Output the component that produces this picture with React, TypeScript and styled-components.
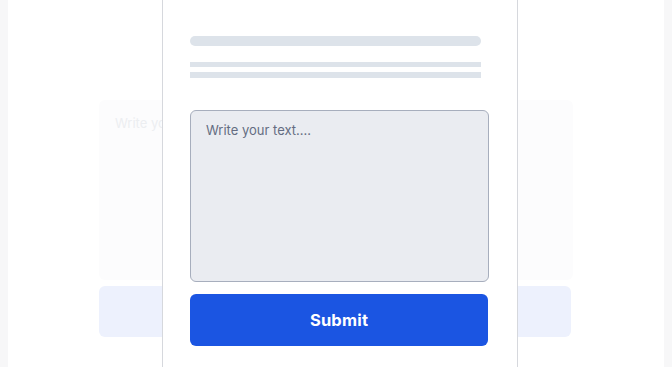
import React from "react";
import styled, { createGlobalStyle } from "styled-components";

const GlobalStyle = createGlobalStyle`
    html, body {
        margin: 0;
        padding: 0;
        background: #ffffff;
        font-family: Inter, "Noto Sans", sans-serif;
        overflow: hidden;
    }
`;

const Page = styled.div`
    display: grid;
    grid-template-columns: 8px 1fr 8px;
    height: 367px;
    overflow: hidden;
`;

const Gutter = styled.div`
    background: #f7f7f8;
`;

const Stage = styled.div`
    position: relative;
    background: #ffffff;
`;

const BackForm = styled.div`
    display: flex;
    flex-direction: column;
    gap: 6px;
    width: 474px;
    padding: 100px 0 0 91px;
`;

const BackCard = styled.div`
    height: 180px;
    border-radius: 6px;
    background: #fcfcfd;
    padding: 15px 16px;
    box-sizing: border-box;
    font-size: 13px;
    color: #eceef1;
`;

const BackButton = styled.div`
    width: 472px;
    height: 51px;
    border-radius: 6px;
    background: #edf1fd;
`;

const Modal = styled.div`
    position: absolute;
    top: -2px;
    bottom: -20px;
    left: 154px;
    width: 356px;
    box-sizing: border-box;
    background: #ffffff;
    border-left: 1px solid #d6d8dd;
    border-right: 1px solid #d6d8dd;
    padding: 38px 0 0 27px;
    display: flex;
    flex-direction: column;
`;

const Bar = styled.div<{ h: number; w: number; r?: number }>`
    width: ${({ w }) => w}px;
    height: ${({ h }) => h}px;
    border-radius: ${({ r }) => r ?? 0}px;
    background: #dde3ea;
`;

const Lines = styled.div`
    display: flex;
    flex-direction: column;
    gap: 5px;
    margin-top: 16px;
`;

const TextBox = styled.textarea`
    margin-top: 32px;
    width: 299px;
    height: 172px;
    box-sizing: border-box;
    resize: none;
    border: 1px solid #a7aebd;
    border-radius: 6px;
    background: #eaecf1;
    padding: 10px 15px;
    font-family: Inter, "Noto Sans", sans-serif;
    font-size: 13px;
    line-height: 18px;
    outline: none;

    &::placeholder {
        color: #646c82;
    }
`;

const SubmitButton = styled.button`
    margin-top: 12px;
    width: 298px;
    height: 52px;
    border: none;
    border-radius: 6px;
    background: #1b55e2;
    color: #ffffff;
    font-family: Inter, "Noto Sans", sans-serif;
    font-size: 16.5px;
    font-weight: 700;
    letter-spacing: 0.2px;
    cursor: pointer;
`;

const App: React.FC = () => {
    return (
        <>
            <GlobalStyle />
            <Page>
                <Gutter />
                <Stage>
                    <BackForm>
                        <BackCard>Write your text....</BackCard>
                        <BackButton />
                    </BackForm>
                    <Modal>
                        <Bar w={291} h={10} r={5} />
                        <Lines>
                            <Bar w={291} h={5} />
                            <Bar w={291} h={6} />
                        </Lines>
                        <TextBox placeholder="Write your text...." />
                        <SubmitButton>Submit</SubmitButton>
                    </Modal>
                </Stage>
                <Gutter />
            </Page>
        </>
    );
};

export default App;
